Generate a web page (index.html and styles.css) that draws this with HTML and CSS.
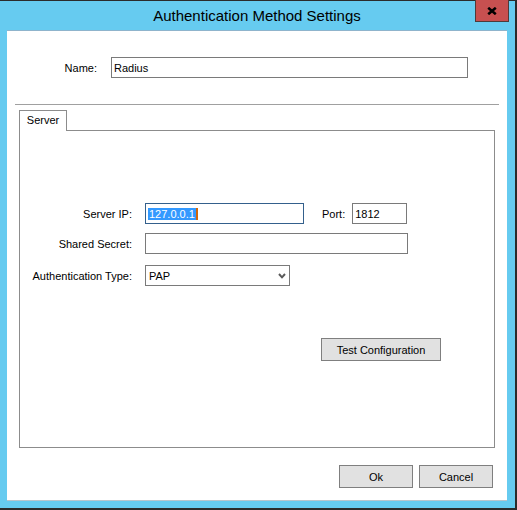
FILE: index.html
```html
<!DOCTYPE html>
<html lang="en">
<head>
  <meta charset="UTF-8" />
  <title>Authentication Method Settings</title>
  <link rel="stylesheet" href="styles.css">
</head>
<body>
  <div class="window">
    <div class="titlebar">Authentication Method Settings</div>
    <button class="close-btn" title="Close">
      <svg width="10" height="8" viewBox="0 0 10 8"><path d="M1.2 0.8 L8.8 7.2 M8.8 0.8 L1.2 7.2" stroke="#000" stroke-width="2.6" fill="none"/></svg>
    </button>

    <div class="client">
      <div class="name-row">
        <label class="name-label">Name:</label>
        <input class="text name-input" type="text" value="Radius" />
      </div>

      <hr class="divider" />

      <div class="tabs">
        <div class="tab">Server</div>
      </div>
      <div class="tab-panel">
        <div class="field-row">
          <label class="label">Server IP:</label>
          <div class="text ip-box"><span class="selected">127.0.0.1</span><span class="caret"></span></div>
          <label class="port-label">Port:</label>
          <input class="text port-input" type="text" value="1812" />
        </div>
        <div class="field-row secret-row">
          <label class="label">Shared Secret:</label>
          <input class="text secret-input" type="password" value="" />
        </div>
        <div class="field-row type-row">
          <label class="label">Authentication Type:</label>
          <div class="text select">
            <span>PAP</span>
            <svg width="8" height="6" viewBox="0 0 8 6"><polyline points="1,1 4,4.3 7,1" stroke="#5a5a5a" stroke-width="2" fill="none"/></svg>
          </div>
        </div>
        <button class="btn test-btn">Test Configuration</button>
      </div>

      <div class="footer">
        <button class="btn">Ok</button>
        <button class="btn">Cancel</button>
      </div>
    </div>
  </div>
</body>
</html>
```

FILE: styles.css
```css
* {
  box-sizing: border-box;
}
html, body {
  margin: 0;
  padding: 0;
  background: #fff;
  font-family: 'Liberation Sans', Arial, sans-serif;
  font-size: 11px;
  color: #000;
}
.window {
  position: relative;
  width: 517px;
  height: 510px;
  background: #66cbf0;
  border-top: 1px solid #2b2b2b;
  border-right: 2px solid #2b2b2b;
  border-bottom: 2px solid #2b2b2b;
  padding: 0 8px 7px 7px;
}
.titlebar {
  height: 29px;
  line-height: 29px;
  text-align: center;
  font-size: 15px;
  color: #000;
}
.close-btn {
  position: absolute;
  top: -1px;
  right: 6px;
  width: 34px;
  height: 22px;
  padding: 0;
  background: #c75050;
  border: 1px solid #4f3a3a;
  border-top: none;
  display: flex;
  align-items: center;
  justify-content: center;
}
.client {
  width: 500px;
  height: 471px;
  background: #fff;
  border-top: 1px solid #8fb4cc;
  border-bottom: 1px solid #b8c4cc;
}
.text {
  height: 21px;
  margin: 0;
  padding: 0 2px;
  border: 1px solid #7a7a7a;
  background: #fff;
  font-family: inherit;
  font-size: 11px;
  color: #000;
  outline: none;
}
.name-row {
  display: flex;
  align-items: center;
  margin-top: 26px;
}
.name-label {
  width: 90px;
  text-align: right;
  margin-right: 14px;
}
.name-input {
  width: 357px;
}
.divider {
  margin: 26px 8px 0;
  height: 0;
  border: 0;
  border-top: 1px solid #a0a0a0;
}
.tabs {
  display: flex;
  margin-top: 5px;
  padding-left: 12px;
}
.tab {
  position: relative;
  z-index: 1;
  width: 48px;
  height: 21px;
  margin-bottom: -1px;
  line-height: 19px;
  text-align: center;
  background: #fff;
  border: 1px solid #8c8c8c;
  border-bottom: none;
}
.tab-panel {
  height: 318px;
  margin: 0 12px;
  padding-top: 72px;
  border: 1px solid #8c8c8c;
}
.field-row {
  display: flex;
  align-items: center;
}
.secret-row {
  margin-top: 9px;
}
.type-row {
  margin-top: 11px;
}
.label {
  width: 112px;
  margin-right: 13px;
  text-align: right;
}
.ip-box {
  width: 159px;
  display: flex;
  align-items: center;
  border-color: #34608c;
}
.selected {
  background: #3399ff;
  color: #fff;
  line-height: 12px;
  padding: 0 1px;
}
.caret {
  width: 2px;
  height: 12px;
  background: #d0660a;
}
.port-label {
  margin-left: 18px;
  margin-right: 7px;
}
.port-input {
  width: 55px;
}
.secret-input {
  width: 263px;
}
.select {
  width: 145px;
  display: flex;
  align-items: center;
  justify-content: space-between;
  padding: 0 3px;
}
.btn {
  width: 74px;
  height: 23px;
  padding: 0;
  background: #e1e1e1;
  border: 1px solid #7f7f7f;
  font-family: inherit;
  font-size: 11px;
  color: #000;
}
.test-btn {
  width: 120px;
  margin: 52px 0 0 301px;
}
.footer {
  display: flex;
  justify-content: flex-end;
  gap: 6px;
  margin-top: 17px;
  padding-right: 14px;
}
```
